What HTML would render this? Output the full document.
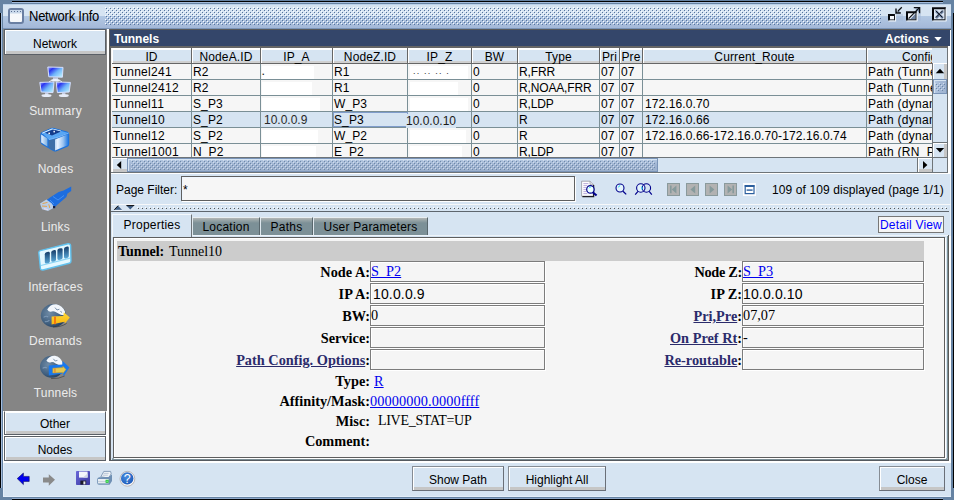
<!DOCTYPE html>
<html>
<head>
<meta charset="utf-8">
<title>Network Info</title>
<style>
*{box-sizing:border-box;margin:0;padding:0}
html,body{width:954px;height:500px;overflow:hidden}
body{position:relative;background:#d6e4f2;font-family:"Liberation Sans",Arial,sans-serif;font-size:12px;color:#000;line-height:14px}
.abs{position:absolute}
.t{position:absolute;white-space:nowrap}
#titlebar{left:3px;top:4px;width:948px;height:26px;background:linear-gradient(#bcd2ea 0,#bcd2ea 1px,#d6e4f2 1px,#d6e4f2 12px,#b2c8e3 12px,#a4b8d8 24px,#7a94b8 24px,#7a94b8 25px,#5a5a5a 25px)}
.bumps{background-image:radial-gradient(circle at 1px 1px,#f6f9fd 0.8px,rgba(255,255,255,0) 1.2px),radial-gradient(circle at 1px 1px,#f6f9fd 0.8px,rgba(255,255,255,0) 1.2px),radial-gradient(circle at 2px 2px,rgba(110,135,170,.55) 0.8px,rgba(255,255,255,0) 1.2px),radial-gradient(circle at 2px 2px,rgba(110,135,170,.55) 0.8px,rgba(255,255,255,0) 1.2px);
 background-size:4px 4px;background-position:0 0,2px 2px,0 0,2px 2px}
#side{left:3px;top:29px;width:104px;height:382px;background:#858585}
.sbtn{position:absolute;left:4px;width:102px;background:#d6e4f2;border:1px solid #5a5f66;box-shadow:inset 1px 1px 0 #fff,inset 0 -3px 0 #c6c6c6;text-align:center;font-size:12px}
.slabel{position:absolute;left:3px;width:105px;text-align:center;color:#ececec;font-size:12px;letter-spacing:0.2px}
.th{position:absolute;top:48px;height:16px;background:#d6e4f2;border-right:1px solid #666;border-bottom:1px solid #666;box-shadow:inset 1px 2px 0 #fff,inset 0 -2px 0 #d0d0d0;text-align:center;line-height:18px;font-size:12px;overflow:hidden;white-space:nowrap;letter-spacing:0.12px}
.row{position:absolute;left:112px;width:820px;height:16px;border-bottom:1px solid #7a8f96;background:#f6f6f6;overflow:hidden}
.row.sel{background:#d6e4f2}
.c{position:absolute;top:0;height:16px;border-right:1px solid #7a8f96;line-height:16px;white-space:nowrap;overflow:hidden;padding-left:1px;font-size:12px}
.wp{position:absolute;background:#fff;height:13px}
.lb{position:absolute;font-family:"Liberation Serif","Times New Roman",serif;font-weight:bold;font-size:14.3px;white-space:nowrap;text-align:right;line-height:16px}
.lb u{color:#2b2b6b}
.bx{position:absolute;height:21px;border:1px solid #7c7c7c;background:#f5f5f5;font-family:"Liberation Serif","Times New Roman",serif;font-size:14.3px;line-height:19px;white-space:nowrap;padding-left:0;box-shadow:inset 1px 1px 0 #fff,1px 1px 0 #fff;overflow:hidden}
.lnk{color:#0000ee;text-decoration:underline}
.btn{position:absolute;height:25px;background:#d6e4f2;border:1px solid #6a6f78;border-top-color:#868c94;border-left-color:#868c94;box-shadow:inset 1px 1px 0 #fff,inset 0 -3px 0 #c6c6c6;text-align:center;line-height:27px;font-size:12px}
.tab{position:absolute;text-align:center;font-size:12px;white-space:nowrap;letter-spacing:0.22px}
.tab.u{top:217px;height:18px;background:linear-gradient(#b4b6b6 0,#9aa6a8 2px,#7c9097 5px);border-top:1px solid #e8eef2;border-right:1px solid #59676d;border-left:1px solid #dfe8ee;line-height:18px}
.nav{position:absolute;top:183px;width:13px;height:13px;background:#b2b2b2;border:1px solid #8a9a9c}
.sb{position:absolute;background:#d6e4f2}
</style>
</head>
<body>
<!-- outer frame -->
<div class="abs" style="left:0;top:0;width:954px;height:4px;background:#6683a3"></div>
<div class="abs" style="left:0;top:496px;width:954px;height:4px;background:#6683a3"></div>
<div class="abs" style="left:0;top:0;width:3px;height:500px;background:#6683a3"></div>
<div class="abs" style="left:951px;top:0;width:3px;height:500px;background:#6683a3"></div>
<div class="abs" style="left:12px;top:1px;width:931px;height:1px;background:#000"></div>
<div class="abs" style="left:12px;top:2px;width:931px;height:1px;background:#a4bcdc"></div>
<div class="abs" style="left:12px;top:499px;width:931px;height:1px;background:#000"></div>
<div class="abs" style="left:12px;top:498px;width:931px;height:1px;background:#8ea8ca"></div>
<div class="abs" style="left:0;top:13px;width:1px;height:475px;background:#000"></div>
<div class="abs" style="left:1px;top:13px;width:1px;height:475px;background:#a4bcdc"></div>
<div class="abs" style="left:953px;top:13px;width:1px;height:475px;background:#000"></div>
<div class="abs" style="left:3px;top:4px;width:948px;height:493px;background:#d6e4f2;box-shadow:inset 1px -1px 0 #e4eefa"></div>
<div class="abs" id="titlebar"></div>
<div class="t" style="left:29px;top:9px;font-size:13px;line-height:16px;letter-spacing:-0.25px;transform:scaleY(1.08);transform-origin:0 12.5px">Network Info</div>
<!-- sidebar -->
<div class="abs" style="left:3px;top:29px;width:106px;height:434px;background:#fff"></div>
<div class="abs" id="side"></div>
<div class="sbtn" style="top:29px;height:26px;line-height:29px">Network</div>
<div class="slabel" style="top:104px">Summary</div>
<div class="slabel" style="top:162px">Nodes</div>
<div class="slabel" style="top:220px">Links</div>
<div class="slabel" style="top:280px">Interfaces</div>
<div class="slabel" style="top:334px">Demands</div>
<div class="slabel" style="top:386px">Tunnels</div>
<div class="sbtn" style="top:411px;height:24px;line-height:24px;border-top-color:#fff">Other</div>
<div class="sbtn" style="top:436px;height:25px;line-height:26px">Nodes</div>
<!-- main container -->
<div class="abs" style="left:948px;top:30px;width:3px;height:144px;background:#fff"></div>
<div class="abs" style="left:950px;top:174px;width:1px;height:62px;background:#eef4fa"></div>
<div class="abs" style="left:949px;top:236px;width:2px;height:227px;background:#fff"></div>
<div class="abs" style="left:109px;top:30px;width:1px;height:431px;background:#5a5a5a"></div>
<div class="abs" style="left:110px;top:47px;width:1px;height:414px;background:#5a5a5a"></div>
<div class="abs" style="left:111px;top:47px;width:1px;height:127px;background:#666"></div>
<div class="abs" style="left:109px;top:460px;width:840px;height:1px;background:#555a60"></div>
<div class="abs" style="left:109px;top:461px;width:842px;height:2px;background:#fff"></div>
<div class="abs" style="left:110px;top:30px;width:840px;height:16px;background:#34466a"></div>
<div class="abs" style="left:110px;top:46px;width:838px;height:2px;background:#666"></div>
<div class="t" style="left:114px;top:32px;color:#fff;font-weight:bold">Tunnels</div>
<div class="t" style="left:885px;top:32px;color:#fff;font-weight:bold">Actions</div>
<svg class="abs" style="left:934px;top:37px" width="8" height="5"><path d="M0.3 0h7.4L4 4.2z" fill="#fff"/></svg>
<!-- table -->
<div class="abs" style="left:111px;top:48px;width:837px;height:125px;background:#f5f5f5;border-right:1px solid #6e7478;border-bottom:1px solid #6e7478"></div>
<div class="abs" style="left:932px;top:48px;width:15px;height:16px;background:#d6e4f2"></div>

<div class="th" style="left:112px;width:80px;overflow:visible">ID</div>
<div class="th" style="left:192px;width:69px;overflow:visible">NodeA.ID</div>
<div class="th" style="left:261px;width:72px;overflow:visible">IP_A</div>
<div class="th" style="left:333px;width:75px;overflow:visible">NodeZ.ID</div>
<div class="th" style="left:408px;width:64px;overflow:visible">IP_Z</div>
<div class="th" style="left:472px;width:46px;overflow:visible">BW</div>
<div class="th" style="left:518px;width:82px;overflow:visible">Type</div>
<div class="th" style="left:600px;width:20px;overflow:visible">Pri</div>
<div class="th" style="left:620px;width:23px;overflow:visible">Pre</div>
<div class="th" style="left:643px;width:224px;overflow:visible">Current_Route</div>
<div class="th" style="left:867px;width:65px;border-right:none;text-align:left;padding-left:35px">Config</div>
<div class="row" style="top:64px;height:16px">
<div class="c" style="left:0px;width:80px;letter-spacing:0.3px">Tunnel241</div>
<div class="c" style="left:80px;width:69px;letter-spacing:0.1px">R2</div>
<div class="c" style="left:149px;width:72px;letter-spacing:0.1px"></div>
<div class="c" style="left:221px;width:75px;letter-spacing:0.1px">R1</div>
<div class="c" style="left:296px;width:64px;letter-spacing:0.1px"></div>
<div class="c" style="left:360px;width:46px;letter-spacing:0.1px">0</div>
<div class="c" style="left:406px;width:82px;letter-spacing:-0.15px">R,FRR</div>
<div class="c" style="left:488px;width:20px;letter-spacing:0.1px">07</div>
<div class="c" style="left:508px;width:23px;letter-spacing:0.1px">07</div>
<div class="c" style="left:531px;width:224px;letter-spacing:0.1px;padding-left:2px"></div>
<div class="c" style="left:755px;width:65px;letter-spacing:0.3px;border-right:none">Path (Tunnel241)</div>
</div>
<div class="row" style="top:80px;height:16px">
<div class="c" style="left:0px;width:80px;letter-spacing:0.3px">Tunnel2412</div>
<div class="c" style="left:80px;width:69px;letter-spacing:0.1px">R2</div>
<div class="c" style="left:149px;width:72px;letter-spacing:0.1px"></div>
<div class="c" style="left:221px;width:75px;letter-spacing:0.1px">R1</div>
<div class="c" style="left:296px;width:64px;letter-spacing:0.1px"></div>
<div class="c" style="left:360px;width:46px;letter-spacing:0.1px">0</div>
<div class="c" style="left:406px;width:82px;letter-spacing:-0.15px">R,NOAA,FRR</div>
<div class="c" style="left:488px;width:20px;letter-spacing:0.1px">07</div>
<div class="c" style="left:508px;width:23px;letter-spacing:0.1px">07</div>
<div class="c" style="left:531px;width:224px;letter-spacing:0.1px;padding-left:2px"></div>
<div class="c" style="left:755px;width:65px;letter-spacing:0.3px;border-right:none">Path (Tunnel2412)</div>
</div>
<div class="row" style="top:96px;height:16px">
<div class="c" style="left:0px;width:80px;letter-spacing:0.3px">Tunnel11</div>
<div class="c" style="left:80px;width:69px;letter-spacing:0.1px">S_P3</div>
<div class="c" style="left:149px;width:72px;letter-spacing:0.1px"></div>
<div class="c" style="left:221px;width:75px;letter-spacing:0.1px">W_P3</div>
<div class="c" style="left:296px;width:64px;letter-spacing:0.1px"></div>
<div class="c" style="left:360px;width:46px;letter-spacing:0.1px">0</div>
<div class="c" style="left:406px;width:82px;letter-spacing:-0.15px">R,LDP</div>
<div class="c" style="left:488px;width:20px;letter-spacing:0.1px">07</div>
<div class="c" style="left:508px;width:23px;letter-spacing:0.1px">07</div>
<div class="c" style="left:531px;width:224px;letter-spacing:0.1px;padding-left:2px">172.16.0.70</div>
<div class="c" style="left:755px;width:65px;letter-spacing:0.3px;border-right:none">Path (dynamic)</div>
</div>
<div class="row sel" style="top:112px;height:16px">
<div class="c" style="left:0px;width:80px;letter-spacing:0.3px">Tunnel10</div>
<div class="c" style="left:80px;width:69px;letter-spacing:0.1px">S_P2</div>
<div class="c" style="left:149px;width:72px;letter-spacing:0.1px"></div>
<div class="c" style="left:221px;width:75px;letter-spacing:0.1px;border:1px solid #7f9ccb;line-height:14px;padding-left:0;height:15px;overflow:visible">S_P3</div>
<div class="c" style="left:296px;width:64px;letter-spacing:0.1px"></div>
<div class="c" style="left:360px;width:46px;letter-spacing:0.1px">0</div>
<div class="c" style="left:406px;width:82px;letter-spacing:-0.15px">R</div>
<div class="c" style="left:488px;width:20px;letter-spacing:0.1px">07</div>
<div class="c" style="left:508px;width:23px;letter-spacing:0.1px">07</div>
<div class="c" style="left:531px;width:224px;letter-spacing:0.1px;padding-left:2px">172.16.0.66</div>
<div class="c" style="left:755px;width:65px;letter-spacing:0.3px;border-right:none">Path (dynamic)</div>
</div>
<div class="row" style="top:128px;height:16px">
<div class="c" style="left:0px;width:80px;letter-spacing:0.3px">Tunnel12</div>
<div class="c" style="left:80px;width:69px;letter-spacing:0.1px">S_P2</div>
<div class="c" style="left:149px;width:72px;letter-spacing:0.1px"></div>
<div class="c" style="left:221px;width:75px;letter-spacing:0.1px">W_P2</div>
<div class="c" style="left:296px;width:64px;letter-spacing:0.1px"></div>
<div class="c" style="left:360px;width:46px;letter-spacing:0.1px">0</div>
<div class="c" style="left:406px;width:82px;letter-spacing:-0.15px">R</div>
<div class="c" style="left:488px;width:20px;letter-spacing:0.1px">07</div>
<div class="c" style="left:508px;width:23px;letter-spacing:0.1px">07</div>
<div class="c" style="left:531px;width:224px;letter-spacing:0.1px;padding-left:2px">172.16.0.66-172.16.0.70-172.16.0.74</div>
<div class="c" style="left:755px;width:65px;letter-spacing:0.3px;border-right:none">Path (dynamic)</div>
</div>
<div class="row" style="top:144px;height:14px">
<div class="c" style="left:0px;width:80px;letter-spacing:0.3px">Tunnel1001</div>
<div class="c" style="left:80px;width:69px;letter-spacing:0.1px">N_P2</div>
<div class="c" style="left:149px;width:72px;letter-spacing:0.1px"></div>
<div class="c" style="left:221px;width:75px;letter-spacing:0.1px">E_P2</div>
<div class="c" style="left:296px;width:64px;letter-spacing:0.1px"></div>
<div class="c" style="left:360px;width:46px;letter-spacing:0.1px">0</div>
<div class="c" style="left:406px;width:82px;letter-spacing:-0.15px">R,LDP</div>
<div class="c" style="left:488px;width:20px;letter-spacing:0.1px">07</div>
<div class="c" style="left:508px;width:23px;letter-spacing:0.1px">07</div>
<div class="c" style="left:531px;width:224px;letter-spacing:0.1px;padding-left:2px"></div>
<div class="c" style="left:755px;width:65px;letter-spacing:0.3px;border-right:none">Path (RN_P2)</div>
</div>
<div class="wp" style="left:262px;top:66px;width:52px"></div>
<div class="wp" style="left:262px;top:82px;width:50px"></div>
<div class="wp" style="left:262px;top:98px;width:58px"></div>
<div class="wp" style="left:262px;top:130px;width:56px"></div>
<div class="wp" style="left:262px;top:146px;width:54px"></div>
<div class="wp" style="left:410px;top:66px;width:58px"></div>
<div class="wp" style="left:410px;top:82px;width:48px"></div>
<div class="wp" style="left:410px;top:98px;width:58px"></div>
<div class="wp" style="left:410px;top:130px;width:56px"></div>
<div class="wp" style="left:410px;top:146px;width:52px"></div>
<div class="t" style="left:262px;top:67px;font-size:9px;line-height:10px;color:#222;font-weight:bold">.</div>
<div class="t" style="left:413px;top:66px;font-size:9px;line-height:10px;color:#333;letter-spacing:1.2px">.. .. .. .</div>
<div class="t" style="left:264px;top:113px;color:#2a2a2a">10.0.0.9</div>
<div class="t" style="left:406px;top:114px;color:#1a1a1a;background:#d6e4f2">10.0.0.10</div>
<!-- vscroll -->
<div class="sb" style="left:932px;top:63px;width:16px;height:95px;border-left:1px solid #6e7478;border-right:1px solid #6e7478"></div>
<div class="sb" style="left:933px;top:63px;width:14px;height:17px;border-bottom:1px solid #6e7478;box-shadow:inset 1px 1px 0 #fff,inset -3px 0 0 #c6c6c6"></div>
<div class="abs" style="left:933px;top:79px;width:14px;height:15px;background:linear-gradient(90deg,#b8cce6,#a4b8d6 50%,#a0b4d0);border:1px solid #7a94b8;box-shadow:inset 1px 1px 0 #d6e4f2"></div>
<div class="sb" style="left:933px;top:142px;width:14px;height:15px;border-top:1px solid #6e7478;box-shadow:inset 1px 1px 0 #fff,inset -3px 0 0 #c6c6c6"></div>
<!-- hscroll -->
<div class="sb" style="left:112px;top:157px;width:836px;height:16px;border-top:1px solid #6e7478;border-bottom:1px solid #6e7478;border-right:1px solid #6e7478"></div>
<div class="sb" style="left:112px;top:158px;width:15px;height:14px;box-shadow:inset 1px 1px 0 #fff,inset 0 -3px 0 #c6c6c6"></div>
<div class="abs" style="left:127px;top:158px;width:531px;height:14px;background:linear-gradient(#b4c8e2,#a0b4d2 50%,#9cb0cc);border:1px solid #7a94b8;box-shadow:inset 1px 1px 0 #d6e4f2"></div>
<div class="sb" style="left:917px;top:158px;width:16px;height:14px;border-left:1px solid #6e7478;border-right:1px solid #6e7478;box-shadow:inset 1px 1px 0 #fff,inset 0 -3px 0 #c6c6c6"></div>
<!-- page filter -->
<div class="t" style="left:116px;top:183px">Page Filter:</div>
<div class="abs" style="left:181px;top:176px;width:394px;height:25px;background:#f6f6f6;border:1px solid #606060;box-shadow:1px 1px 0 #fff,inset 1px 1px 0 #eef6ff"></div>
<div class="abs" style="left:111px;top:173px;width:838px;height:1px;background:#fff"></div>
<div class="t" style="left:183px;top:183px">*</div>
<div class="t" style="left:772px;top:183px;letter-spacing:0.1px">109 of 109 displayed (page 1/1)</div>
<div class="nav" style="left:667px"></div><div class="nav" style="left:686px"></div><div class="nav" style="left:705px"></div><div class="nav" style="left:724px"></div>
<!-- divider -->
<div class="abs" style="left:111px;top:204px;width:840px;height:1px;background:#f6f8fa"></div>
<div class="abs" style="left:137px;top:207px;width:810px;height:1px;background-image:linear-gradient(90deg,#fbfdff 1px,rgba(0,0,0,0) 1px);background-size:4px 1px"></div>
<div class="abs" style="left:138px;top:208px;width:810px;height:1px;background-image:linear-gradient(90deg,#585858 1px,rgba(0,0,0,0) 1px);background-size:4px 1px"></div>
<div class="abs" style="left:111px;top:211px;width:838px;height:1px;background:#5e666e"></div>
<!-- tabs -->
<div class="tab" style="left:112px;top:214px;width:80px;height:23px;background:#d6e4f2;border-left:1px solid #f4f8fc;border-top:1px solid #f4f8fc;border-right:1px solid #6e7478;line-height:21px">Properties</div>
<div class="tab u" style="left:192px;width:68px">Location</div>
<div class="tab u" style="left:260px;width:53px">Paths</div>
<div class="tab u" style="left:313px;width:115px">User Parameters</div>
<div class="abs" style="left:878px;top:216px;width:66px;height:17px;background:#f5f5f5;border:1px solid #777;color:#0000ff;text-align:center;line-height:17px;letter-spacing:0.2px">Detail View</div>
<!-- panel -->
<div class="abs" style="left:192px;top:235px;width:756px;height:1px;background:#eef4fa"></div>
<div class="abs" style="left:948px;top:235px;width:1px;height:226px;background:#5a5a5a"></div>
<div class="abs" style="left:947px;top:236px;width:1px;height:224px;background:#7a9096"></div>
<div class="abs" style="left:112px;top:458px;width:836px;height:2px;background:linear-gradient(#9fb2ba,#6e8088)"></div>
<div class="abs" style="left:113px;top:237px;width:832px;height:221px;background:#f5f5f5;border:1px solid #5e5e5e;border-right-color:#5e5e5e;box-shadow:inset 1px 1px 0 #fff,1px 1px 0 #fff"></div>
<div class="abs" style="left:117px;top:241px;width:807px;height:20px;background:#cccccc"></div>
<div class="t" style="left:118px;top:244px;font-family:'Liberation Serif',serif;font-size:14px;line-height:16px;word-spacing:1.5px"><b>Tunnel:</b> Tunnel10</div>

<div class="lb" style="left:170px;width:200px;top:264px">Node A:</div>
<div class="bx" style="left:370px;top:261px;width:175px"><span class="lnk">S_P2</span></div>
<div class="lb" style="left:170px;width:200px;top:286px">IP A:</div>
<div class="bx" style="left:370px;top:283px;width:175px"><span style="font-family:'Liberation Sans',sans-serif;font-size:14px;letter-spacing:0.15px;padding-left:2px;position:relative;top:0.5px">10.0.0.9</span></div>
<div class="lb" style="left:170px;width:200px;top:308px">BW:</div>
<div class="bx" style="left:370px;top:305px;width:175px">0</div>
<div class="lb" style="left:170px;width:200px;top:330px">Service:</div>
<div class="bx" style="left:370px;top:327px;width:175px"></div>
<div class="lb" style="left:170px;width:200px;top:352px"><u>Path Config. Options</u>:</div>
<div class="bx" style="left:370px;top:349px;width:175px"></div>
<div class="lb" style="left:542px;width:200px;top:264px"><span style="letter-spacing:-0.3px">Node Z:</span></div>
<div class="bx" style="left:742px;top:261px;width:182px"><span class="lnk">S_P3</span></div>
<div class="lb" style="left:542px;width:200px;top:286px">IP Z:</div>
<div class="bx" style="left:742px;top:283px;width:182px"><span style="font-family:'Liberation Sans',sans-serif;font-size:14px;letter-spacing:0.15px;padding-left:0px;position:relative;top:0.5px">10.0.0.10</span></div>
<div class="lb" style="left:542px;width:200px;top:308px"><u>Pri,Pre</u>:</div>
<div class="bx" style="left:742px;top:305px;width:182px">07,07</div>
<div class="lb" style="left:542px;width:200px;top:330px"><u>On Pref Rt</u>:</div>
<div class="bx" style="left:742px;top:327px;width:182px">-</div>
<div class="lb" style="left:542px;width:200px;top:352px"><u>Re-routable</u>:</div>
<div class="bx" style="left:742px;top:349px;width:182px"></div>
<div class="lb" style="left:170px;width:200px;top:373px">Type:</div>
<div class="t lnk" style="left:374px;top:373px;font-family:'Liberation Serif',serif;font-size:14.3px;line-height:16px;letter-spacing:0.1px">R</div>
<div class="lb" style="left:170px;width:200px;top:393px">Affinity/Mask:</div>
<div class="t lnk" style="left:370px;top:393px;font-family:'Liberation Serif',serif;font-size:14.3px;line-height:16px;letter-spacing:0.1px">00000000.0000ffff</div>
<div class="lb" style="left:170px;width:200px;top:413px">Misc:</div>
<div class="t" style="left:378px;top:413px;font-family:'Liberation Serif',serif;font-size:14.3px;line-height:16px;letter-spacing:0.1px;font-size:14px;letter-spacing:-0.3px">LIVE_STAT=UP</div>
<div class="lb" style="left:170px;width:200px;top:433px">Comment:</div>

<div class="btn" style="left:412px;top:466px;width:92px">Show Path</div>
<div class="btn" style="left:508px;top:466px;width:98px">Highlight All</div>
<div class="btn" style="left:879px;top:466px;width:66px">Close</div>

<svg class="abs" style="left:0;top:0" width="954" height="500" viewBox="0 0 954 500">
<defs>
<linearGradient id="mon" x1="0" y1="0.1" x2="1" y2="0.9"><stop offset="0" stop-color="#8e98f6"/><stop offset="0.22" stop-color="#2c34f0"/><stop offset="0.55" stop-color="#6fb4fa"/><stop offset="1" stop-color="#bff3fc"/></linearGradient>
<linearGradient id="bx1" x1="0" y1="0" x2="1" y2="0"><stop offset="0" stop-color="#bcd6f4"/><stop offset="0.2" stop-color="#eaf3ff"/><stop offset="0.6" stop-color="#9cc4f0"/><stop offset="1" stop-color="#1a74e0"/></linearGradient>
<linearGradient id="bx2" x1="0" y1="0" x2="1" y2="0"><stop offset="0" stop-color="#e8f2ff"/><stop offset="1" stop-color="#7aaee0"/></linearGradient>
<linearGradient id="slot" x1="0" y1="0" x2="0" y2="1"><stop offset="0" stop-color="#163c68"/><stop offset="1" stop-color="#58a8d8"/></linearGradient>
<radialGradient id="glb" cx="0.35" cy="0.4" r="0.75"><stop offset="0" stop-color="#6f8ba6"/><stop offset="0.6" stop-color="#3f5e7e"/><stop offset="1" stop-color="#1b3555"/></radialGradient>
<linearGradient id="ylw" x1="0" y1="0" x2="0" y2="1"><stop offset="0" stop-color="#ffd83a"/><stop offset="1" stop-color="#f8b810"/></linearGradient>
<linearGradient id="sav" x1="0" y1="0" x2="1" y2="1"><stop offset="0" stop-color="#6a68d8"/><stop offset="1" stop-color="#3a38a0"/></linearGradient>
<radialGradient id="hlp" cx="0.4" cy="0.35" r="0.7"><stop offset="0" stop-color="#4a8ee0"/><stop offset="1" stop-color="#1c58b8"/></radialGradient>
<pattern id="bp" width="4" height="4" patternUnits="userSpaceOnUse"><rect x="0" y="0" width="1" height="1" fill="#fafcfe"/><rect x="1" y="1" width="1" height="1" fill="#56749e"/><rect x="2" y="2" width="1" height="1" fill="#fafcfe"/><rect x="3" y="3" width="1" height="1" fill="#56749e"/></pattern>
<pattern id="bp2" width="4" height="4" patternUnits="userSpaceOnUse"><rect x="0" y="0" width="1" height="1" fill="#d0dcec"/><rect x="1" y="1" width="1" height="1" fill="#6e88a8"/><rect x="2" y="2" width="1" height="1" fill="#d0dcec"/><rect x="3" y="3" width="1" height="1" fill="#6e88a8"/></pattern>
</defs>
<g shape-rendering="crispEdges">
<g transform="translate(105,7)"><rect width="776" height="18" fill="url(#bp)"/></g>
<g transform="translate(131,160)"><rect width="524" height="10" fill="url(#bp2)"/></g>
<g transform="translate(935,83)"><rect width="10" height="8" fill="url(#bp2)"/></g>
</g>
<!-- title icon -->
<rect x="9" y="9" width="14" height="14" rx="2" fill="#f6f8fb" stroke="#6a7fa2" stroke-width="2"/>
<rect x="10" y="10" width="12" height="3.5" fill="#c9d8ea"/>
<g fill="#5a6f92"><rect x="11" y="11" width="1" height="1"/><rect x="14" y="11" width="1" height="1"/><rect x="17" y="11" width="1" height="1"/><rect x="20" y="11" width="1" height="1"/></g>
<!-- iconify -->
<g>
<rect x="896" y="14" width="7" height="7" fill="#a6bad8" opacity="0.5"/>
<rect x="888" y="14" width="7" height="6.4" fill="#f4f7fb"/>
<path d="M888 15h7M889 14v6.4" stroke="#06080c" stroke-width="2" fill="none"/>
<path d="M888 19.9h7M894.5 14v6.4" stroke="#161a20" stroke-width="1" fill="none"/>
<path d="M888.5 21h7M895.6 15v6.4" stroke="#f4f8fc" stroke-width="1" fill="none"/>
<path d="M897 9v4h4z" fill="#7c92b2"/>
<path d="M896 8.4V13H900.8" fill="none" stroke="#0c1016" stroke-width="1.4"/>
<path d="M896.4 12.6L901.8 7.2" stroke="#0c1016" stroke-width="1.3"/>
<path d="M897.4 8.6v3.6" stroke="#eef3f9" stroke-width=".8" opacity=".8"/>
</g>
<!-- maximize -->
<g>
<rect x="917" y="13" width="4" height="8" fill="#a6bad8" opacity="0.5"/>
<rect x="906" y="11.2" width="10.6" height="9.2" fill="#f4f7fb"/>
<path d="M910 19.6L915.8 13.2V19.6z" fill="#6d82a2"/>
<path d="M906 12.2h10.6M907 11.2v9.2" stroke="#06080c" stroke-width="2" fill="none"/>
<path d="M906 19.9h10.6M916.1 11.2v9.2" stroke="#161a20" stroke-width="1.1" fill="none"/>
<path d="M906.5 21h11M917.2 12.4v8.6" stroke="#f4f8fc" stroke-width="1" fill="none" opacity=".9"/>
<path d="M915 8.6h4v4z" fill="#7c92b2"/>
<path d="M908.6 18.6L919.4 7.6" stroke="#0c1016" stroke-width="1.3"/>
<path d="M913.8 7.6H919.6V13.2" fill="none" stroke="#0c1016" stroke-width="1.4"/>
</g>
<!-- close -->
<g>
<rect x="932" y="7.2" width="13.6" height="13.2" fill="#dfe8f4"/>
<path d="M932 8.2h13.6M933 7.2v13.2" stroke="#06080c" stroke-width="2" fill="none"/>
<path d="M932 19.9h13.6M945.1 7.2v13.2" stroke="#161a20" stroke-width="1.1" fill="none"/>
<path d="M932.5 21h14M946.2 8.4v12.6" stroke="#f4f8fc" stroke-width="1" fill="none" opacity=".9"/>
<path d="M936 11L943 18M943 11L936 18" stroke="#6d82a2" stroke-width="2.6"/>
<path d="M935.6 10.6L942.4 17.4M942.8 10.6L936 17.4" stroke="#10141c" stroke-width="1"/>
<path d="M937.2 10.4L944 17.2" stroke="#f4f8fc" stroke-width=".7" opacity=".8"/>
</g>
<!-- summary icon -->
<g stroke="#d6e0ff" stroke-width="1">
<path d="M52 80l-3 2M59 80l3 2" stroke="#e8eefc"/>
<rect x="53" y="77.5" width="5" height="2.5" fill="#c4cce4" stroke="none"/>
<ellipse cx="55.5" cy="80.3" rx="4.2" ry="1.2" fill="#eef2fb" stroke="none"/>
<polygon points="47.8,67 63,67.4 62.4,77.2 48.8,76.8" fill="url(#mon)"/>
<rect x="45" y="92.5" width="3.4" height="2.5" fill="#c4cce4" stroke="none"/>
<ellipse cx="46.5" cy="95.6" rx="5" ry="1.5" fill="#e6ecf8" stroke="none"/>
<polygon points="39.8,82.4 54,82 53,92.6 41.2,92" fill="url(#mon)"/>
<rect x="62" y="92.5" width="3.4" height="2.5" fill="#c4cce4" stroke="none"/>
<ellipse cx="63.8" cy="95.6" rx="5" ry="1.5" fill="#e6ecf8" stroke="none"/>
<polygon points="56.2,82 70.4,82.4 69.2,92 57.4,92.6" fill="url(#mon)"/>
</g>
<!-- nodes icon -->
<g>
<path d="M40.4 134.5Q40.2 132.8 42 132L51 128Q52.5 127.5 54 128L67 131.5Q69.2 132.2 69.2 134.5V144Q69.2 146 67.5 146.8L56.5 151.3Q54.8 151.9 53.2 151L42 144.5Q40.4 143.6 40.4 141.8Z" fill="#1b72dc"/>
<polygon points="41.2,134.5 47.4,138.6 47.4,146.6 41.2,142.6" fill="url(#bx2)"/>
<polygon points="42,133 52,128.6 67.8,132.8 57,137.6 48.6,139.4" fill="#58a6f4"/>
<path d="M42.2 133.2L52 129L61 131.2" fill="none" stroke="#d8ecff" stroke-width="1"/>
<polygon points="45,132.8 53,129.4 61,131.6 52,135.6" fill="#143c8c"/>
<rect x="48.4" y="132.6" width="1.6" height="1.6" fill="#fff"/><rect x="53.4" y="130.8" width="1.6" height="1.6" fill="#e8f0ff"/>
<polygon points="48.6,140.6 58,137.8 58,150 53.6,150.6 48.6,147.6" fill="#3f6fa8"/>
<polygon points="55,139.4 68.4,134 68.4,145 55,150.4" fill="url(#bx1)"/>
<path d="M49 139.6L58 137.2L68.6 133" fill="none" stroke="#8ec6ff" stroke-width="0.8"/>
</g>
<!-- links icon -->
<g>
<polygon points="71.2,186.4 71.2,191 67.5,193.5 66.4,197 56.8,205.2 53.6,208.6 50,204 46,200.4 50,197.4 58.6,192 63.6,190.4" fill="#1c6de0"/>
<path d="M53 196.5l5 3.5 6-4.5M50 200l4 4" stroke="#4a94f4" stroke-width="0.9" fill="none"/>
<polygon points="40,203.4 46.4,199.6 51.6,203.2 54.4,207.4 48,211 42,209.2" fill="#b9cde6"/>
<path d="M42.5 203.6l5-1.2M42 206l5 0.4M48.8 204.4l1 3.6" stroke="#e89a3a" stroke-width="0.9"/>
<path d="M44 208.6l4 1.2" stroke="#e8d8f0" stroke-width="1.2"/>
<rect x="53" y="206" width="2.2" height="2.2" fill="#182040"/>
</g>
<!-- interfaces icon -->
<g>
<path d="M38.8 252.6Q38.8 251 40.4 250.6L68 243.8Q70.4 243.4 70.6 245.6L71 261Q71 262.8 69.2 263.2L43 270Q40.6 270.4 40.4 268.2Z" fill="#e4f8ff" stroke="#62c2ee" stroke-width="1.4"/>
<path d="M41 265.5l29-7.4" stroke="#8ad4f4" stroke-width="1.2"/>
<path d="M44.8 254.2q0-1.6 1.6-2l1.8-.4q1.6-.2 1.6 1.4v8q0 1.6-1.6 2l-1.8.4q-1.6.2-1.6-1.4z" fill="url(#slot)"/>
<path d="M51.2 252.4q0-1.6 1.6-2l1.6-.4q1.6-.2 1.6 1.4v8q0 1.6-1.6 2l-1.6.4q-1.6.2-1.6-1.4z" fill="url(#slot)"/>
<path d="M57.4 250.6q0-1.6 1.6-2l2-.4q1.6-.2 1.6 1.4v8q0 1.6-1.6 2l-2 .4q-1.6.2-1.6-1.4z" fill="url(#slot)"/>
<path d="M64 249q0-1.6 1.6-2l1.6-.4q1.6-.2 1.6 1.4v8q0 1.6-1.6 2l-1.6.4q-1.6.2-1.6-1.4z" fill="url(#slot)"/>
</g>
<!-- demands icon -->
<g>
<ellipse cx="53.4" cy="315.6" rx="12.6" ry="11.6" fill="url(#glb)"/>
<path d="M47.2 309.6Q50.5 303.6 56.5 304.2Q62.5 305.6 65 311.4L65.4 315.4Q60.6 315.6 57.4 313Q54 310.6 51.6 311.6Q49 312.4 47.2 309.6Z" fill="#f2f6fb"/>
<path d="M55 307.6l2 2.4 2.4-.8M60.4 311.4l1.6 1" stroke="#7d93ad" stroke-width="1" fill="none"/>
<path d="M43.6 317.4q2.6-2 4.6-.4M44.8 321.6q3 .6 4.6-1.4" stroke="#8aa4c0" stroke-width="1.1" fill="none" opacity=".75"/>
<path d="M51.6 316.6L63.4 316L63.8 312.2L69.8 317.4L65 323.6L64.6 321.8L51.6 324.4Z" fill="url(#ylw)"/>
<rect x="54" y="316.6" width="2" height="7.6" fill="#f47a10"/>
<path d="M53 327q8 .2 13.6-3.6" stroke="#2a2a2a" stroke-width="1" fill="none" opacity=".55"/>
</g>
<!-- tunnels icon -->
<g>
<ellipse cx="51.8" cy="366.8" rx="11.8" ry="11" fill="url(#glb)"/>
<path d="M46.4 360.6Q49.5 355.4 55 355.8Q60.6 357 62.6 362.4L62.8 365.4Q58.4 365.4 55.6 363.4Q52.6 361.4 50.4 362.4Q48 363 46.4 360.6Z" fill="#f2f6fb"/>
<path d="M53.4 358.8l1.8 2.2 2.2-.6" stroke="#7d93ad" stroke-width="1" fill="none"/>
<path d="M42.6 368.4q2.4-1.8 4.2-.4" stroke="#8aa4c0" stroke-width="1.1" fill="none" opacity=".75"/>
<path d="M48.8 365.4L62.4 364.6L62.6 361L69.4 367.6L63.6 376.2L63.2 373.6L48.8 375.4Z" fill="#1878ee"/>
<path d="M52.8 368.2L62.8 367.6L62.8 366.2L66 369.4L62.8 373.6L62.8 372.4L52.8 373Z" fill="#e4c850" stroke="#c89a20" stroke-width=".5"/>
<rect x="54.2" y="368.4" width="1.4" height="4.4" fill="#e88a30"/>
<path d="M51 378.6q8 .4 13.6-2.6" stroke="#2a2a2a" stroke-width="1" fill="none" opacity=".5"/>
</g>
<!-- toolbar: back / forward -->
<path d="M17.2 478.6L23.4 473v3.4h5.8v5h-5.8v3.2z" fill="#0000f0" stroke="#101060" stroke-width=".6"/>
<path d="M55 479.8L48.8 474.2v3.2h-5.8v5h5.8v3.4z" fill="#8a8a8a"/>
<!-- save -->
<rect x="76" y="471" width="14" height="14" rx=".8" fill="url(#sav)"/>
<rect x="79" y="471.6" width="8.6" height="6" fill="#f4f6fb"/>
<path d="M83 477.6l4.6-4v4z" fill="#d0d6e6"/>
<rect x="80.4" y="480.6" width="5.8" height="4" fill="#1a1a2a"/>
<rect x="83.4" y="481.4" width="2" height="3" fill="#e8e8f0"/>
<!-- printer -->
<g>
<polygon points="100.8,476.8 103.8,471.4 110.6,471.4 111.2,473.8 108.6,478" fill="#eef2f6" stroke="#7c96b4" stroke-width=".9"/>
<path d="M103.6 473.4h5M102.8 475.2h5" stroke="#a8b8cc" stroke-width=".7"/>
<path d="M97.2 479.4Q97.2 477.4 99.2 477.2L108.4 477L112 474.6V481L109.6 484.8H99Q97.2 484.6 97.2 482.8Z" fill="#6f90b4"/>
<path d="M98 479h10.6v4.4H98z" fill="#e9eef3"/>
<path d="M98 481.6h10.6" stroke="#b9c6d4" stroke-width=".8"/>
<rect x="105.6" y="479.8" width="3" height="3" fill="#14c030"/>
<rect x="106.4" y="480.6" width="1.3" height="1.3" fill="#9cff9c"/>
</g>
<!-- help -->
<circle cx="127.4" cy="478.8" r="7.4" fill="#f8f8f8" stroke="#b0a8a8" stroke-width=".8"/>
<circle cx="127.2" cy="478.4" r="6.2" fill="url(#hlp)"/>
<text x="127.3" y="483" font-family="Liberation Sans,Arial,sans-serif" font-size="12.5" fill="#fff" text-anchor="middle">?</text>
<!-- page-filter icons -->
<g>
<path d="M581.6 181.2h8.4l3.4 3.2v11.8h-11.8z" fill="#fdfdfe" stroke="#8a8a96" stroke-width=".7"/>
<path d="M590 181.2v3.2h3.4" fill="#e4e4ec" stroke="#8a8a96" stroke-width=".6"/>
<path d="M593.6 185v11.6H582.4" fill="none" stroke="#1e1e24" stroke-width="1.3"/>
<path d="M583.4 183.6h5M583.4 185.6h4M583.4 187.6h3M583.4 189.6h2.6M583.4 191.6h3M583.4 193.6h4" stroke="#b4a4d6" stroke-width=".9"/>
<circle cx="590.4" cy="189.4" r="3.7" fill="#ecffff" stroke="#00008c" stroke-width="1.2"/>
<path d="M589 188.2q.6-1.2 1.8-1.2" stroke="#20d8f0" stroke-width="1" fill="none"/>
<path d="M593 192.4l3.6 3.2" stroke="#00008c" stroke-width="2"/>
<circle cx="620" cy="188" r="4" fill="#e4f4fc" stroke="#00008c" stroke-width="1.1"/>
<path d="M618.4 187.4q.4-1.6 1.8-1.8" stroke="#20d8f0" stroke-width="1" fill="none"/>
<path d="M623 191.2l3.2 3.2" stroke="#00008c" stroke-width="1.3"/>
<circle cx="640.8" cy="188" r="4.2" fill="#e4f4fc" stroke="#00008c" stroke-width="1.1"/>
<circle cx="646.4" cy="188" r="4.2" fill="none" stroke="#00008c" stroke-width="1.1"/>
<path d="M641.4 186.6q1.2 1.2.6 3" stroke="#20d8f0" stroke-width="1" fill="none"/>
<path d="M638 191.4l-2.8 3.2M649.2 191.4l2.6 3.2" stroke="#00008c" stroke-width="1.2"/>
</g>
<!-- nav buttons glyphs -->
<g fill="#869a9c">
<path d="M670 185.6h1.6v7.6H670zM676.4 185.4v8l-4.6-4z"/>
<path d="M695.2 185.4v8l-4.8-4z"/>
<path d="M709.6 185.4v8l4.8-4z"/>
<path d="M734 185.6h-1.6v7.6h1.6zM727.6 185.4v8l4.6-4z"/>
</g>
<!-- list icon -->
<rect x="743" y="183" width="13" height="13" fill="#fafbfd"/>
<rect x="745.2" y="185.6" width="8.8" height="8" fill="#fff" stroke="#2c5f9e" stroke-width="1.2"/>
<rect x="744.8" y="185" width="9.6" height="2" fill="#2c5f9e"/>
<rect x="746.6" y="189.4" width="6" height="1.4" fill="#2c5f9e"/>
<!-- divider arrows -->
<path d="M114 210h8.2l-4.1-4.3z" fill="#3f5f86"/><path d="M114.2 209.8l3.9-4.1" stroke="#0a0a0a" stroke-width="1"/><path d="M114.4 210.3h7.8" stroke="#fbfdff" stroke-width=".8"/>
<path d="M126.4 205.4h8.2l-4.1 4.3z" fill="#3f5f86"/><path d="M126.4 205.6h7.8" stroke="#0a0a0a" stroke-width="1"/><path d="M134.6 205.8l-4 4" stroke="#fbfdff" stroke-width=".8"/>
<!-- scrollbar arrows -->
<path d="M121.2 161v8l-4.4-4z" fill="#000"/>
<path d="M923 161v8l4.4-4z" fill="#000"/>
<path d="M935.8 73.2h8.4l-4.2-4.4z" fill="#000"/>
<path d="M935.8 148h8.4l-4.2 4.4z" fill="#000"/>
</svg>

</body>
</html>
